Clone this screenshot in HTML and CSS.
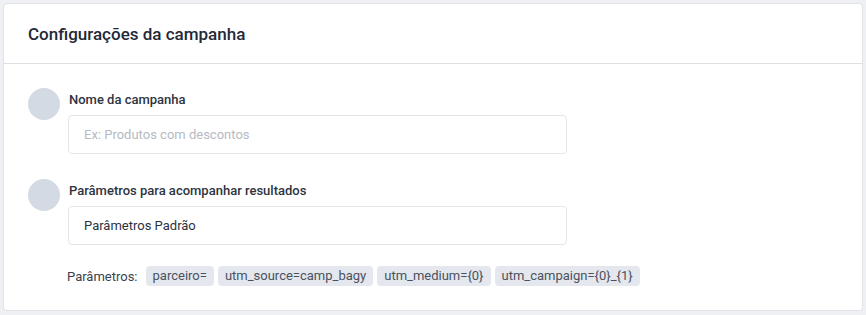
FILE: index.html
```html
<!DOCTYPE html>
<html lang="pt">
<head>
<meta charset="utf-8">
<link rel="stylesheet" href="styles.css">
</head>
<body>
<div class="card">
  <div class="card-header">
    <h2 class="title">Configurações da campanha</h2>
  </div>
  <div class="card-body">
    <div class="row">
      <div class="dot"></div>
      <div class="field">
        <label class="label">Nome da campanha</label>
        <div class="input placeholder">Ex: Produtos com descontos</div>
      </div>
    </div>
    <div class="row">
      <div class="dot"></div>
      <div class="field">
        <label class="label">Parâmetros para acompanhar resultados</label>
        <div class="input">Parâmetros Padrão</div>
        <div class="params">
          <span class="params-label">Parâmetros:</span>
          <span class="chip">parceiro=</span>
          <span class="chip">utm_source=camp_bagy</span>
          <span class="chip">utm_medium={0}</span>
          <span class="chip">utm_campaign={0}_{1}</span>
        </div>
      </div>
    </div>
  </div>
</div>
</body>
</html>
```
FILE: styles.css
```css
* { box-sizing: border-box; }
html, body { margin: 0; }
body {
  background: #eff0f4;
  padding: 3px 3px 4px 3px;
  font-family: Roboto, "Liberation Sans", sans-serif;
  color: #1f2937;
}
.card {
  background: #fff;
  border: 1px solid #e1e2e6;
  border-radius: 4px;
  height: 308px;
}
.card-header {
  height: 60px;
  border-bottom: 1px solid #dedfe2;
  display: flex;
  align-items: center;
  padding-left: 24px;
}
.title {
  margin: 0;
  font-size: 17px;
  font-weight: 500;
  color: #1f2937;
  padding-top: 1px;
}
.card-body {
  padding: 24px 24px 0 24px;
  display: flex;
  flex-direction: column;
  gap: 25px;
}
.row {
  display: flex;
  gap: 8px;
}
.dot {
  width: 32px;
  height: 32px;
  border-radius: 50%;
  background: #d3dae3;
  flex: none;
}
.field {
  display: flex;
  flex-direction: column;
}
.label {
  display: block;
  font-size: 13px;
  font-weight: 500;
  line-height: 20px;
  color: #2d3440;
  padding-top: 2px;
  margin-bottom: 5px;
  padding-left: 1px;
}
.input {
  width: 499px;
  height: 39px;
  border: 1px solid #e3e5ea;
  border-radius: 4px;
  padding: 0 15px;
  display: flex;
  align-items: center;
  font-size: 13px;
  color: #2b3240;
}
.input.placeholder { color: #b6bac2; }
.params {
  display: flex;
  align-items: center;
  gap: 4px;
  margin-top: 21px;
  margin-left: -1px;
}
.params-label {
  font-size: 13px;
  color: #3a414d;
  margin-right: 4px;
}
.chip {
  background: #e4e7ee;
  border-radius: 4px;
  height: 20px;
  line-height: 20px;
  padding: 0 7px;
  font-size: 13px;
  color: #4a5260;
}
```
